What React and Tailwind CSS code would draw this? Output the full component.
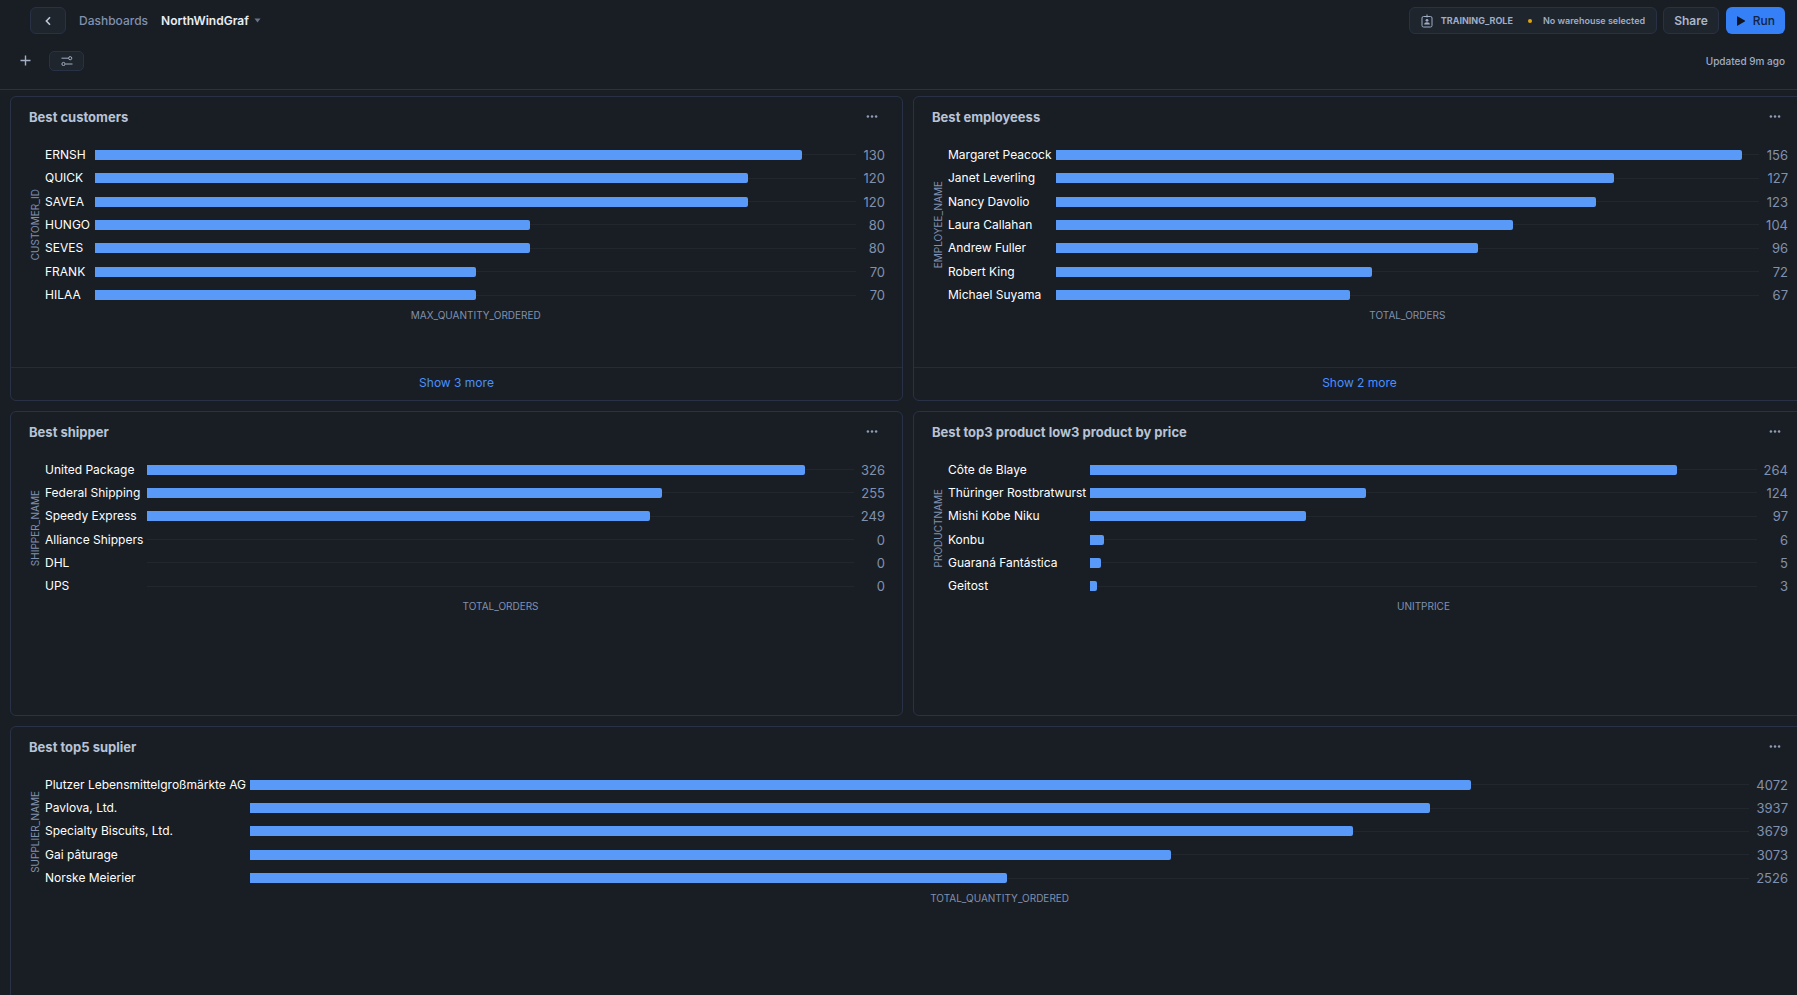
const CHARTS = [
  {
    title: "Best customers",
    yAxis: "CUSTOMER_ID",
    xAxis: "MAX_QUANTITY_ORDERED",
    max: 140,
    more: 3,
    rows: [["ERNSH", 130], ["QUICK", 120], ["SAVEA", 120], ["HUNGO", 80], ["SEVES", 80], ["FRANK", 70], ["HILAA", 70]],
  },
  {
    title: "Best employeess",
    yAxis: "EMPLOYEE_NAME",
    xAxis: "TOTAL_ORDERS",
    max: 160,
    more: 2,
    rows: [
      ["Margaret Peacock", 156],
      ["Janet Leverling", 127],
      ["Nancy Davolio", 123],
      ["Laura Callahan", 104],
      ["Andrew Fuller", 96],
      ["Robert King", 72],
      ["Michael Suyama", 67],
    ],
  },
  {
    title: "Best shipper",
    yAxis: "SHIPPER_NAME",
    xAxis: "TOTAL_ORDERS",
    max: 350,
    rows: [
      ["United Package", 326],
      ["Federal Shipping", 255],
      ["Speedy Express", 249],
      ["Alliance Shippers", 0],
      ["DHL", 0],
      ["UPS", 0],
    ],
  },
  {
    title: "Best top3 product low3 product by price",
    yAxis: "PRODUCTNAME",
    xAxis: "UNITPRICE",
    max: 300,
    rows: [
      ["Côte de Blaye", 264],
      ["Thüringer Rostbratwurst", 124],
      ["Mishi Kobe Niku", 97],
      ["Konbu", 6],
      ["Guaraná Fantástica", 5],
      ["Geitost", 3],
    ],
  },
  {
    title: "Best top5 suplier",
    yAxis: "SUPPLIER_NAME",
    xAxis: "TOTAL_QUANTITY_ORDERED",
    max: 5000,
    wide: true,
    rows: [
      ["Plutzer Lebensmittelgroßmärkte AG", 4072],
      ["Pavlova, Ltd.", 3937],
      ["Specialty Biscuits, Ltd.", 3679],
      ["Gai pâturage", 3073],
      ["Norske Meierier", 2526],
    ],
  },
];

const PLOT_HEIGHTS = { 5: "h-[117px]", 6: "h-[140px]", 7: "h-[164px]" };

function BadgeIcon() {
  return (
    <svg width="12" height="14" viewBox="0 0 12 14" fill="none" stroke="currentColor" aria-hidden="true">
      <rect x="1" y="2.5" width="10" height="10.5" rx="1.5" />
      <path d="M6 0.5v3" />
      <circle cx="6" cy="6.3" r="1.4" fill="currentColor" stroke="none" />
      <path d="M3.2 10.6c0-1.6 1-2.3 2.8-2.3s2.8.7 2.8 2.3z" fill="currentColor" stroke="none" />
    </svg>
  );
}

function FilterIcon() {
  return (
    <svg width="12" height="10" viewBox="0 0 12 10" fill="none" stroke="currentColor" aria-hidden="true">
      <path d="M0.5 2.2h7M4.5 8h7" />
      <circle cx="9.2" cy="2.2" r="1.6" />
      <circle cx="2.5" cy="8" r="1.6" />
    </svg>
  );
}

function BarChart({ chart }) {
  return (
    <div className="grid grid-cols-[18px_auto_1fr_auto] pr-[17px] pl-4">
      <div className="flex items-center justify-center pr-[3px]">
        <span className="rotate-180 text-[10px] leading-4 whitespace-nowrap text-[#8091b0] [writing-mode:vertical-rl]">
          {chart.yAxis}
        </span>
      </div>
      <ul className={`col-span-3 grid auto-rows-fr grid-cols-subgrid ${PLOT_HEIGHTS[chart.rows.length]}`}>
        {chart.rows.map(([name, value]) => (
          <li key={name} className="col-span-3 grid grid-cols-subgrid items-center">
            <span className="mr-1 min-w-[46px] text-xs leading-4 whitespace-nowrap text-white">{name}</span>
            <span className="flex h-[10px] items-center">
              <span
                className="h-full shrink-0 rounded-r-[2px] bg-[#5999f8]"
                style={{ width: `${(value / chart.max) * 100}%` }}
              />
              <span className="h-px grow bg-[#22272d]" />
            </span>
            <span className="ml-[7px] text-right text-[13px] leading-4 text-[#8091b0]">{value}</span>
          </li>
        ))}
      </ul>
      <div className="col-start-3 text-center text-[10px] leading-4 text-[#8091b0]">{chart.xAxis}</div>
    </div>
  );
}

function Card({ chart }) {
  return (
    <section
      className={`flex h-[305px] flex-col rounded-md border border-[#293146] ${chart.wide ? "col-span-2" : ""}`}
    >
      <header className="flex h-[46px] shrink-0 items-start justify-between pt-3 pr-6 pl-[18px]">
        <h2 className="text-[13px] leading-4 font-bold text-[#b8c3d6]">{chart.title}</h2>
        <button type="button" aria-label={`${chart.title} options`} className="flex h-4 items-center text-[#8f9cb4]">
          <svg width="12" height="4" viewBox="0 0 12 4" fill="currentColor" aria-hidden="true">
            <circle cx="1.9" cy="1.5" r="1.25" />
            <circle cx="6" cy="1.5" r="1.25" />
            <circle cx="10.1" cy="1.5" r="1.25" />
          </svg>
        </button>
      </header>
      <BarChart chart={chart} />
      {chart.more && (
        <button
          type="button"
          className="mt-auto h-[33px] shrink-0 border-t border-[#262c33] pb-[3px] text-xs leading-4 text-[#4a90ff]"
        >
          Show {chart.more} more
        </button>
      )}
    </section>
  );
}

export default function App() {
  return (
    <div className="h-screen overflow-hidden bg-[#191e24] font-['Inter','Liberation_Sans',sans-serif]">
      <header className="h-[90px] border-b border-[#293146] pt-[7px] pr-3">
        <div className="flex h-[27px] items-center pl-[30px]">
          <button
            type="button"
            aria-label="Back"
            className="flex h-[27px] w-9 items-center justify-center rounded-md border border-[#293146] bg-[#1e252d] text-[#bdc7d8]"
          >
            <svg width="6" height="10" viewBox="0 0 6 10" fill="none" stroke="currentColor" strokeWidth="1.6" aria-hidden="true">
              <path d="M5 1.2L1.4 5L5 8.8" />
            </svg>
          </button>
          <nav className="flex items-center gap-[13px] pl-[13px] text-xs leading-4">
            <a href="#dashboards" className="font-medium text-[#8091b0]">
              Dashboards
            </a>
            <button type="button" className="flex items-center gap-[5px] font-semibold text-[#e8edf5]">
              NorthWindGraf
              <svg width="7" height="5" viewBox="0 0 7 5" fill="#6b7587" aria-hidden="true">
                <path d="M0.5 0.5h6L3.5 4.5z" />
              </svg>
            </button>
          </nav>
          <button
            type="button"
            className="ml-auto flex h-[27px] items-center rounded-md border border-[#293146] bg-[#1e252d] px-[11px] text-[9px] leading-4 text-[#9fadc6]"
          >
            <BadgeIcon />
            <span className="ml-2 font-bold">TRAINING_ROLE</span>
            <span className="mr-[11px] ml-[15px] size-1 rounded-full bg-[#e5a50a]" />
            <span className="font-semibold">No warehouse selected</span>
          </button>
          <button
            type="button"
            className="ml-[6px] h-[27px] rounded-md border border-[#293146] bg-[#1e252d] px-[10px] text-xs leading-4 font-semibold text-[#a9b6cc]"
          >
            Share
          </button>
          <button
            type="button"
            className="ml-[7px] flex h-[27px] items-center gap-[7px] rounded-md bg-[#3580f6] px-[10px] text-xs leading-4 font-medium text-[#14233f]"
          >
            <svg width="10" height="10" viewBox="0 0 10 10" fill="#10161f" aria-hidden="true">
              <path d="M1 0.8v8.4q0 .8.8.4L8.8 5.5q.7-.5 0-1L1.8.4Q1 0 1 .8z" />
            </svg>
            Run
          </button>
        </div>
        <div className="flex h-[53px] items-center pl-5 text-[#a3afc4]">
          <button type="button" aria-label="Add" className="flex size-[11px] items-center justify-center">
            <svg width="11" height="11" viewBox="0 0 11 11" fill="none" stroke="currentColor" strokeWidth="1.4" aria-hidden="true">
              <path d="M5.5 0.5v10M0.5 5.5h10" />
            </svg>
          </button>
          <button
            type="button"
            aria-label="Filters"
            className="ml-[18px] flex h-5 w-[35px] items-center justify-center rounded-[5px] border border-[#293146] bg-[#1e252d]"
          >
            <FilterIcon />
          </button>
          <span className="ml-auto text-[10px] leading-4 font-medium text-[#9fadc6]">Updated 9m ago</span>
        </div>
      </header>
      <main className="-mr-[9px] grid grid-cols-2 gap-[10px] pt-[6px] pl-[10px]">
        {CHARTS.map((chart) => (
          <Card key={chart.title} chart={chart} />
        ))}
      </main>
    </div>
  );
}
